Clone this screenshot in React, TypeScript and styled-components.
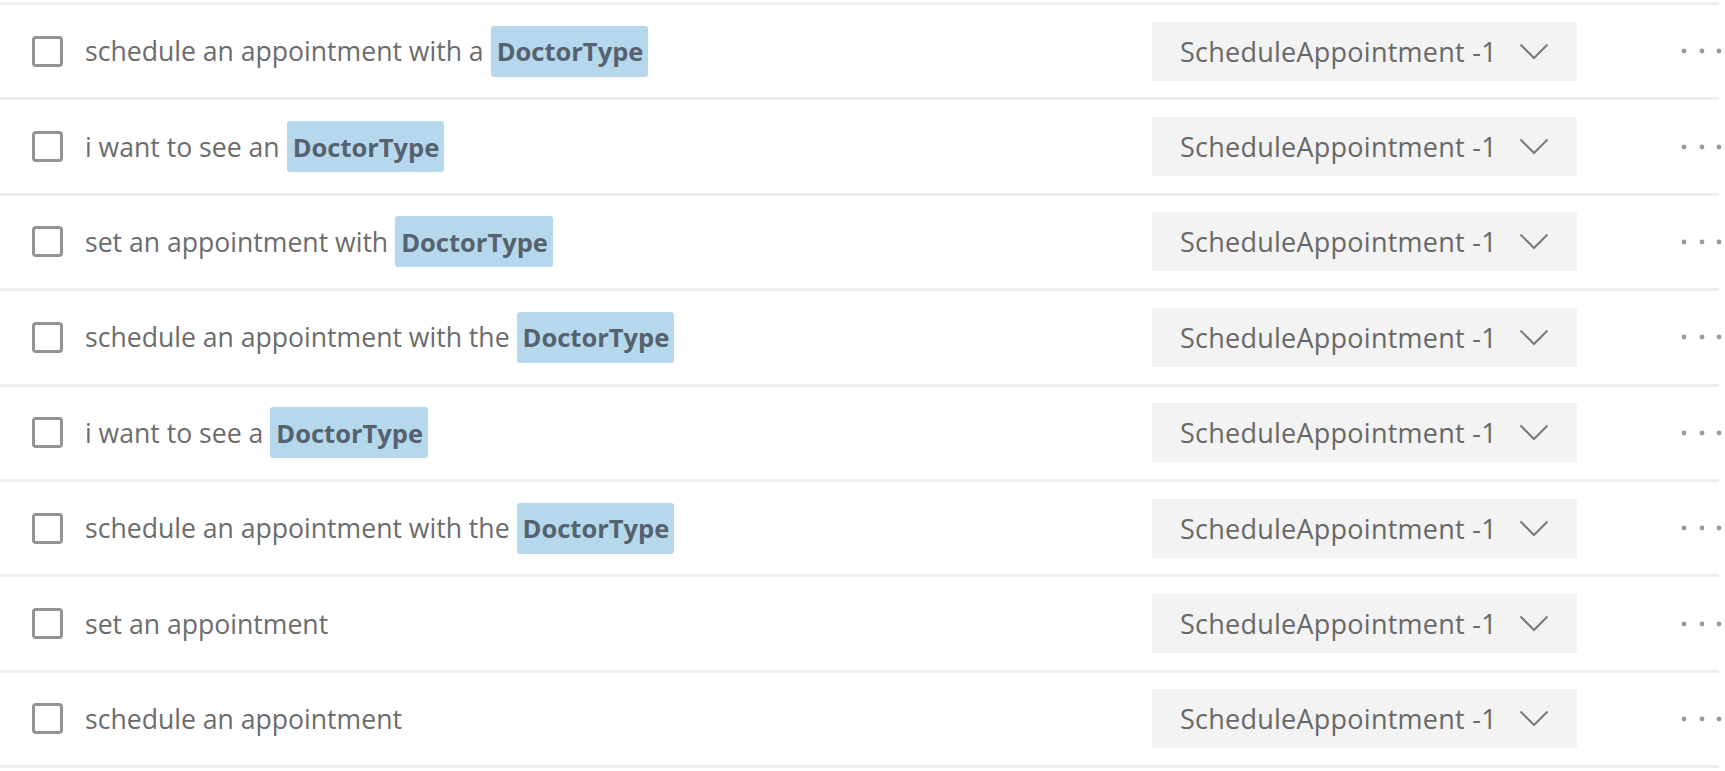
import styled, { createGlobalStyle } from 'styled-components';

const GlobalStyle = createGlobalStyle`
  html, body {
    margin: 0;
    padding: 0;
    background: #ffffff;
  }
  body {
    font-family: 'Open Sans', 'Noto Sans', 'Liberation Sans', sans-serif;
  }
`;

const List = styled.div`
  width: 1725px;
  padding-top: 2px;
`;

const ListTop = styled.div`
  height: 3px;
  margin-right: 6px;
  background: #eeeeee;
`;

const Row = styled.div`
  display: grid;
  grid-template-columns: 31px 1089px 425px minmax(0, 1fr);
  align-items: center;
  height: 92.4px;
  padding-left: 32px;
  margin-right: 6px;
  border-bottom: 3px solid #eeeeee;
  box-sizing: content-box;
`;

const Checkbox = styled.span`
  display: block;
  width: 31px;
  height: 31px;
  box-sizing: border-box;
  border: 3px solid #939393;
  border-radius: 4px;
  background: #ffffff;
`;

const Utterance = styled.div`
  padding-left: 22px;
  font-size: 26.6px;
  color: #6c6c6c;
  white-space: nowrap;
  display: flex;
  align-items: center;
`;

const Entity = styled.span`
  display: inline-flex;
  align-items: center;
  height: 51px;
  padding: 0 5px 0 6px;
  margin-left: 7px;
  border-radius: 3px;
  background: #b5d8ed;
  color: #56626d;
  font-weight: 700;
  font-size: 25.5px;
`;

const IntentSelect = styled.div`
  display: flex;
  align-items: center;
  justify-content: space-between;
  height: 59px;
  padding: 0 28px 0 28px;
  box-sizing: border-box;
  background: #f3f3f3;
  border-radius: 2px;
  color: #686868;
  font-size: 27px;
  letter-spacing: 0.25px;
`;

const MoreCell = styled.div`
  display: flex;
  justify-content: flex-end;
  margin-right: -4px;
`;

const rows: { text: string; entity?: string }[] = [
  { text: 'schedule an appointment with a', entity: 'DoctorType' },
  { text: 'i want to see an', entity: 'DoctorType' },
  { text: 'set an appointment with', entity: 'DoctorType' },
  { text: 'schedule an appointment with the', entity: 'DoctorType' },
  { text: 'i want to see a', entity: 'DoctorType' },
  { text: 'schedule an appointment with the', entity: 'DoctorType' },
  { text: 'set an appointment' },
  { text: 'schedule an appointment' },
];

function Chevron() {
  return (
    <svg width="30" height="17" viewBox="0 0 30 17" fill="none">
      <polyline points="1.5,1.5 15,15 28.5,1.5" stroke="#7a7a7a" strokeWidth="2" />
    </svg>
  );
}

function Dots() {
  return (
    <svg width="42" height="6" viewBox="0 0 42 6">
      <circle cx="3" cy="3" r="2.4" fill="#9a9a9a" />
      <circle cx="21" cy="3" r="2.4" fill="#9a9a9a" />
      <circle cx="38" cy="3" r="2.4" fill="#9a9a9a" />
    </svg>
  );
}

export default function App() {
  return (
    <>
      <GlobalStyle />
      <List>
        <ListTop />
        {rows.map((r, i) => (
          <Row key={i}>
            <Checkbox />
            <Utterance>
              {r.text}
              {r.entity && <Entity>{r.entity}</Entity>}
            </Utterance>
            <IntentSelect>
              <span>ScheduleAppointment -1</span>
              <Chevron />
            </IntentSelect>
            <MoreCell>
              <Dots />
            </MoreCell>
          </Row>
        ))}
      </List>
    </>
  );
}
